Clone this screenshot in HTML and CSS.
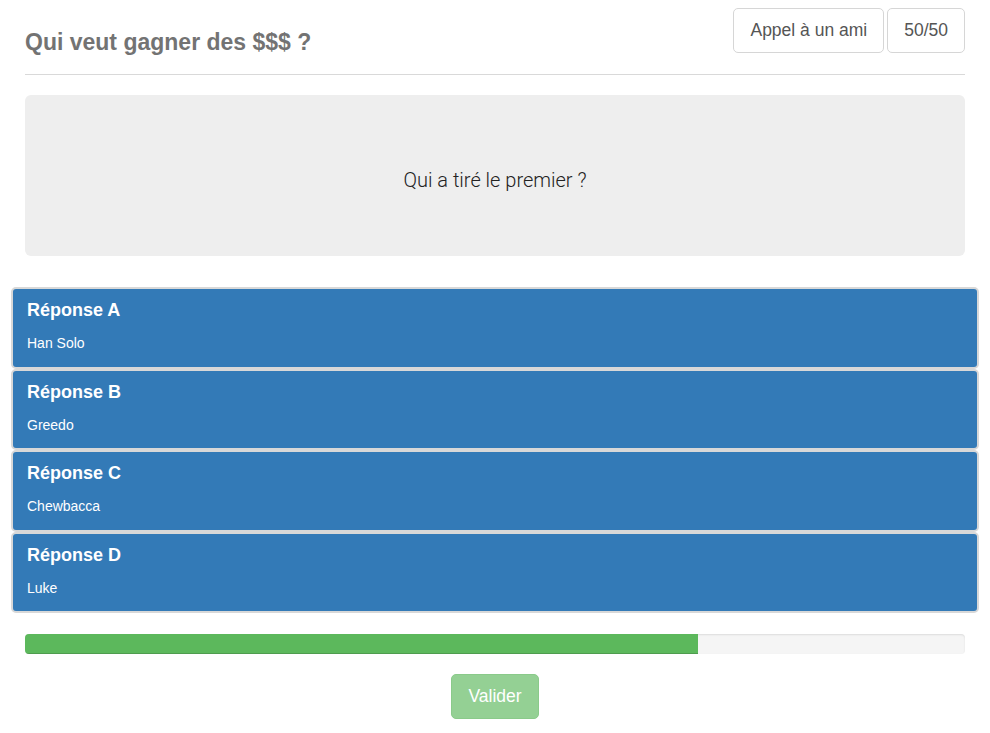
FILE: index.html
```html
<!DOCTYPE html>
<html lang="fr">
<head>
<meta charset="utf-8">
<title>Qui veut gagner des $$$ ?</title>
<link rel="stylesheet" href="styles.css">
</head>
<body>
<div class="container">
  <header class="page-header">
    <h2 class="title">Qui veut gagner des $$$ ?</h2>
    <div class="jokers">
      <button class="btn btn-default">Appel à un ami</button>
      <button class="btn btn-default">50/50</button>
    </div>
  </header>

  <div class="well">
    <p class="question">Qui a tiré le premier ?</p>
  </div>

  <div class="answers">
    <div class="answer">
      <h4 class="answer-heading">Réponse A</h4>
      <p class="answer-text">Han Solo</p>
    </div>
    <div class="answer">
      <h4 class="answer-heading">Réponse B</h4>
      <p class="answer-text">Greedo</p>
    </div>
    <div class="answer">
      <h4 class="answer-heading">Réponse C</h4>
      <p class="answer-text">Chewbacca</p>
    </div>
    <div class="answer">
      <h4 class="answer-heading">Réponse D</h4>
      <p class="answer-text">Luke</p>
    </div>
  </div>

  <div class="progress">
    <div class="progress-bar" style="width: 71.6%"></div>
  </div>

  <div class="actions">
    <button class="btn btn-success" disabled>Valider</button>
  </div>
</div>
</body>
</html>
```

FILE: styles.css
```css
* { box-sizing: border-box; }

html, body {
  margin: 0;
  padding: 0;
  background: #fff;
}

body {
  font-family: "Liberation Sans", Arial, Helvetica, sans-serif;
  font-size: 14px;
  line-height: 1.42857;
  color: #333;
}

.container {
  width: 940px;
  margin: 0 auto;
}

.page-header {
  display: flex;
  justify-content: space-between;
  align-items: flex-start;
  padding-top: 8px;
  padding-bottom: 20px;
  border-bottom: 1px solid #d9d9d9;
  margin-bottom: 20px;
}

.title {
  margin: 22px 0 0;
  font-size: 23px;
  line-height: 24px;
  font-weight: bold;
  color: #737373;
}

.jokers {
  display: flex;
  gap: 3px;
}

.btn {
  font-family: "Liberation Sans", Arial, Helvetica, sans-serif;
  font-size: 17.5px;
  line-height: 23px;
  padding: 10px 16px;
  height: 45px;
  border-radius: 5px;
  border: 1px solid #ccc;
  cursor: pointer;
}

.btn-default {
  background: #fff;
  color: #555;
  border-color: #d6d6d6;
}

.well {
  background: #eee;
  border-radius: 6px;
  height: 161px;
  display: flex;
  align-items: center;
  justify-content: center;
  margin-bottom: 31px;
}

.question {
  margin: 0;
  font-family: Roboto, "Liberation Sans", sans-serif;
  font-weight: 300;
  font-size: 20px;
  line-height: 24px;
  color: #222;
  padding-top: 8px;
}

.answers {
  margin: 0 -14px;
}

.answer {
  background: #337ab7;
  color: #fff;
  border: 2px solid #d8d8d8;
  border-radius: 5px;
  padding: 11px 14px 13px;
  height: 81.6px;
}

.answer-heading {
  margin: 0 0 13px;
  font-size: 18px;
  line-height: 20px;
  font-weight: bold;
}

.answer-text {
  margin: 0;
  font-size: 14px;
  line-height: 20px;
}

.progress {
  margin-top: 21px;
  height: 20px;
  background: #f5f5f5;
  border-radius: 4px;
  overflow: hidden;
  box-shadow: inset 0 1px 2px rgba(0, 0, 0, 0.1);
}

.progress-bar {
  height: 100%;
  background: #5cb85c;
  box-shadow: inset 0 -1px 0 rgba(0, 0, 0, 0.15);
}

.actions {
  display: flex;
  justify-content: center;
  margin-top: 20px;
}

.btn-success {
  background: #5cb85c;
  border-color: #4cae4c;
  color: #fff;
  opacity: 0.65;
  cursor: not-allowed;
}
```
